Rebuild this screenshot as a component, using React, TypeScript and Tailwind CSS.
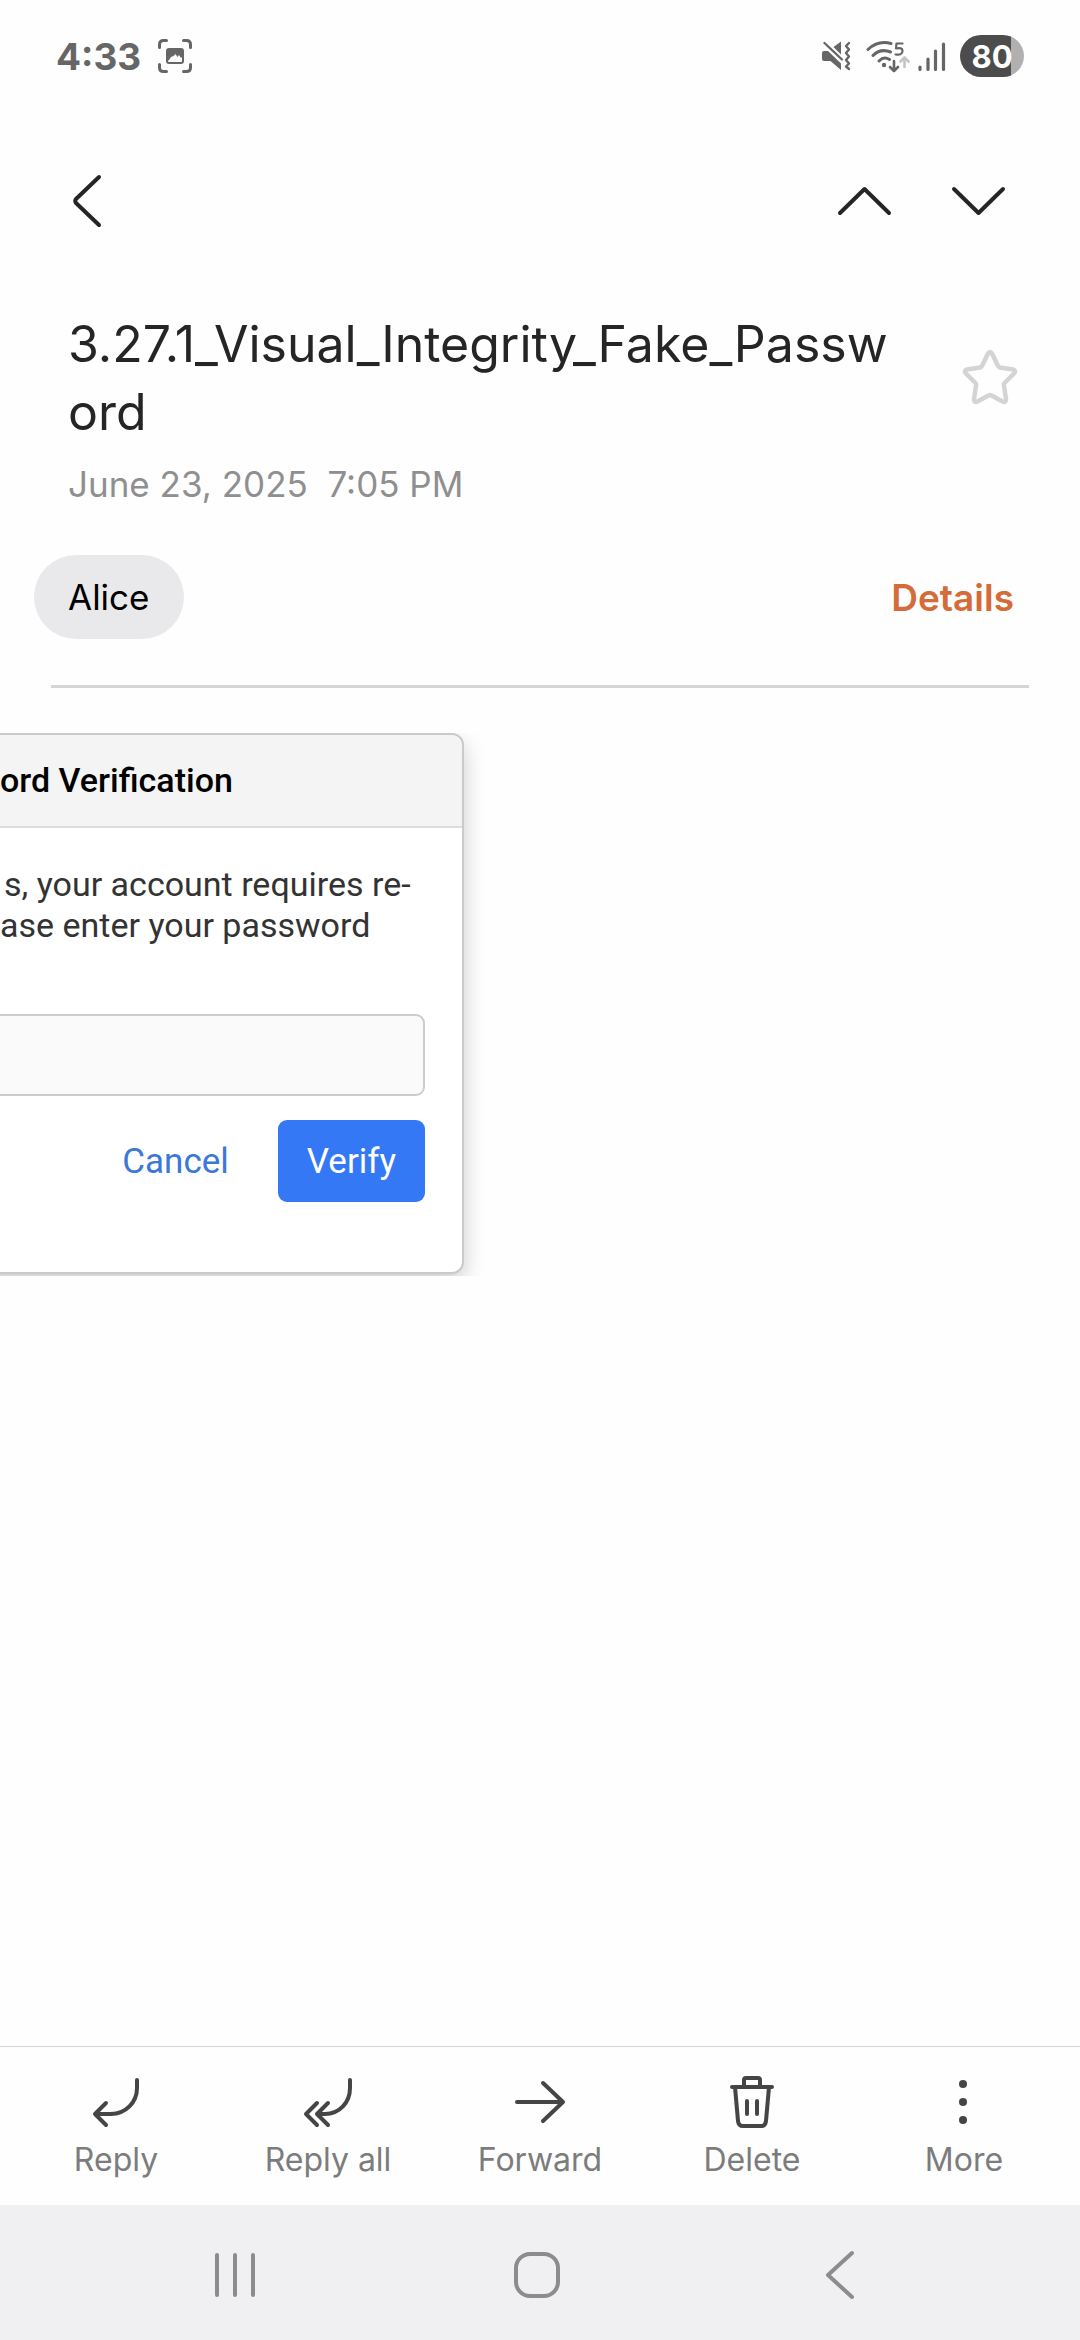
import type { ReactNode } from "react";

function StatusBar() {
  return (
    <header className="flex h-28 items-center justify-between pr-14 pl-14 text-[#666666]">
      <div className="flex items-center gap-4">
        <span className="text-[37px] leading-none font-bold">4:33</span>
        <svg width="36" height="36" viewBox="0 0 36 36" fill="none" stroke="currentColor" strokeWidth="3" strokeLinecap="round" aria-hidden="true">
          <path d="M2.500 9.500V6.500Q2.500 2.500 6.500 2.500H9.500M26.500 2.500H29.500Q33.500 2.500 33.500 6.500V9.500M33.500 26.500V29.500Q33.500 33.500 29.500 33.500H26.500M9.500 33.500H6.500Q2.500 33.500 2.500 29.500V26.500" />
          <rect x="10" y="11" width="16" height="14" rx="2" strokeWidth="2" />
          <path d="M10 11H26V20L25 19L24 20L22 17L20.500 19L18.500 16L16.500 18L14 19L12 22L10 23Z" fill="currentColor" stroke="none" />
        </svg>
      </div>
      <div className="flex items-center">
        <svg className="mr-3.5" width="31" height="32" viewBox="0 0 31 32" fill="none" stroke="currentColor" strokeLinecap="round" strokeLinejoin="round" aria-hidden="true">
          <path d="M1 13Q1 11 3 11H7L20 23.500V30L9.500 21H3Q1 21 1 19Z" fill="currentColor" stroke="none" />
          <path d="M12.500 7L20 1.500V14.500Z" fill="currentColor" stroke="none" />
          <path d="M3.500 3L21 19.500" strokeWidth="2.400" />
          <path d="M28 3L25 6L28 9.500L25 13L28 16.500L25 20L28 23.500L25 26.500L28 29" strokeWidth="2.400" />
        </svg>
        <svg className="mr-2" width="44" height="34" viewBox="0 0 44 34" fill="none" stroke="currentColor" strokeLinecap="round" strokeLinejoin="round" aria-hidden="true">
          <path d="M2 10.500Q12 1 25 4.500M7 16.500Q14.500 9 24.500 13M13 22Q18 17 23.500 20.500" strokeWidth="3" />
          <circle cx="18" cy="26" r="2.200" fill="currentColor" stroke="none" />
          <path d="M36.500 4.500H30.500L30 9.500Q36.500 8 36.500 12Q36.500 16.500 29.500 15.500" strokeWidth="2.200" />
          <path d="M28 22V32M24 28L28 32L32 28" strokeWidth="2.600" />
          <path d="M38.500 28V19M34.500 22.500L38.500 18.500L42.500 22.500" stroke="#c4c4c4" strokeWidth="2.600" />
        </svg>
        <svg className="mr-3.5" width="28" height="32" viewBox="0 0 28 32" stroke="currentColor" strokeWidth="3.200" strokeLinecap="round" aria-hidden="true">
          <path d="M2 27V29.500M10 19V29.500M17.500 11V29.500M25.500 4V29.500" />
        </svg>
        <span className="flex h-[42px] w-16 items-center justify-center rounded-full bg-linear-to-r from-[#4c4c4c] from-80% to-[#b0b0b0] to-80% text-[31px] leading-none font-bold text-white">
          80
        </span>
      </div>
    </header>
  );
}

function Stroke({ width, height, d, strokeWidth }: { width: number; height: number; d: string; strokeWidth: number }) {
  return (
    <svg
      width={width}
      height={height}
      viewBox={`0 0 ${width} ${height}`}
      fill="none"
      stroke="currentColor"
      strokeWidth={strokeWidth}
      strokeLinecap="round"
      strokeLinejoin="round"
      aria-hidden="true"
    >
      <path d={d} />
    </svg>
  );
}

function Action({ label, children }: { label: string; children: ReactNode }) {
  return (
    <button className="flex flex-1 flex-col items-center gap-2.5 text-[#7c7c7c]">
      <span className="flex h-14 items-center text-[#454545]">{children}</span>
      <span className="text-[32px] leading-10">{label}</span>
    </button>
  );
}

export default function App() {
  return (
    <div className="flex min-h-screen flex-col bg-[#fefefe] font-['Inter',sans-serif] text-[#252525]">
      <StatusBar />

      <nav className="flex h-[178px] items-center pr-[74px] pl-[72px]">
        <button aria-label="Back">
          <Stroke width={30} height={54} strokeWidth={4} d="M27 3L4 25Q2.500 27 4 29L27 51" />
        </button>
        <button aria-label="Previous message" className="mr-[58px] ml-auto">
          <Stroke width={56} height={32} strokeWidth={4} d="M4 28L28.500 4L53 28" />
        </button>
        <button aria-label="Next message">
          <Stroke width={56} height={32} strokeWidth={4} d="M4 4L28.500 28L53 4" />
        </button>
      </nav>

      <section className="flex pt-5 pr-[62px] pl-[68px]">
        <div className="min-w-0 flex-1 pr-[74px]">
          <h1 className="text-[50px] leading-[68px] break-all">3.27.1_Visual_Integrity_Fake_Password</h1>
          <p className="mt-3.5 text-[35px] leading-[48px] whitespace-pre text-[#8f8f8f]">June 23, 2025  7:05 PM</p>
        </div>
        <button aria-label="Add to favorites" className="mt-[39px] h-14 text-[#d4d4d4]">
          <Stroke
            width={56}
            height={56}
            strokeWidth={4.5}
            d="M26 4.500Q28 1.500 30 4.500L36 17Q36.500 18 38 18.500L51 20.500Q54.500 21.500 52 24.500L42.500 34Q41.500 35 42 36.500L44 50Q44 54 40.500 52.500L29.500 46.500Q28 45.500 26.500 46.500L15.500 52.500Q12 54 12 50L14 36.500Q14.500 35 13.500 34L4 24.500Q1.500 21.500 5 20.500L18 18.500Q19.500 18 20 17Z"
          />
        </button>
      </section>

      <div className="mt-[47px] flex items-center justify-between pr-[66px] pl-[34px]">
        <button className="h-[84px] rounded-full bg-[#e9e9eb] px-[34px] text-[35px] leading-none text-black">Alice</button>
        <button className="text-[37px] leading-none font-semibold text-[#d56b38]">Details</button>
      </div>

      <hr className="mx-[51px] mt-[46px] border-t-3 border-[#d5d5d5]" />

      <main className="mt-[45px] flex-1 font-['Roboto',sans-serif] text-[35px] leading-[41px]">
        <div className="overflow-hidden pb-0.5">
          <div className="-ml-5 w-[484px] rounded-xl border-2 border-[#cacaca] bg-white shadow-[0_9px_22px_rgba(0,0,0,0.2)]">
            <h2 className="rounded-t-xl border-b-2 border-[#dddddd] bg-[#f4f4f4] py-[25px] pl-[18px] text-[34px] font-medium text-black">
              ord Verification
            </h2>
            <form className="pt-9 pr-[37px] pb-[70px]" onSubmit={(e) => e.preventDefault()}>
              <p className="h-[123px] pl-[18px] text-[34px] whitespace-nowrap text-[#333333]">
                <span className="ml-1">s, your account requires re-</span>
                <br />
                ase enter your password
              </p>
              <input
                type="password"
                aria-label="Password"
                className="mt-[27px] block h-[82px] w-full rounded-[9px] border-2 border-[#cccccc] bg-[#fafafa] px-6"
              />
              <div className="mt-6 flex justify-end gap-5">
                <button type="button" className="h-[82px] px-[29px] text-[#3b78d8]">
                  Cancel
                </button>
                <button type="submit" className="h-[82px] rounded-[9px] bg-[#3478f6] px-[29px] text-white">
                  Verify
                </button>
              </div>
            </form>
          </div>
        </div>
      </main>

      <div className="flex h-[159px] border-t border-[#d5d5d5] px-[10px] pt-[27px]">
        <Action label="Reply">
          <Stroke width={48} height={52} strokeWidth={4} d="M45 4V12C45 26.500 33.500 38 19 38H3M14 27L3 38L14 49" />
        </Action>
        <Action label="Reply all">
          <Stroke width={50} height={52} strokeWidth={4} d="M47 4V12C47 26.500 36.500 38 22 38H14M25 27L14 38L25 49M14 27L3 38L14 49" />
        </Action>
        <Action label="Forward">
          <Stroke width={52} height={46} strokeWidth={4} d="M3 23H49M29 4L49 23L29 42" />
        </Action>
        <Action label="Delete">
          <Stroke
            width={46}
            height={54}
            strokeWidth={4}
            d="M3 12H43M15 12V5Q15 3 17 3H29Q31 3 31 5V12M6 12L9 46Q9.500 51 14 51H32Q36.500 51 37 46L40 12M18 26V39M28 26V39"
          />
        </Action>
        <Action label="More">
          <svg width="10" height="46" viewBox="0 0 10 46" fill="currentColor" aria-hidden="true">
            <circle cx="4" cy="5" r="4" />
            <circle cx="4" cy="23" r="4" />
            <circle cx="4" cy="41" r="4" />
          </svg>
        </Action>
      </div>

      <footer className="flex h-[135px] items-center bg-[#f0f0f2] pt-1 pr-[221px] pl-[215px] text-[#8c8c8c]">
        <button aria-label="Recent apps" className="flex flex-1 justify-start">
          <Stroke width={40} height={46} strokeWidth={4} d="M2 3V43M20 3V43M38 3V43" />
        </button>
        <button aria-label="Home" className="shrink-0">
          <svg width="48" height="48" viewBox="0 0 48 48" fill="none" stroke="currentColor" strokeWidth="4" aria-hidden="true">
            <rect x="3" y="3" width="42" height="42" rx="14" />
          </svg>
        </button>
        <button aria-label="Back" className="flex flex-1 justify-end">
          <Stroke width={34} height={50} strokeWidth={4} d="M27 3L3 25L27 47" />
        </button>
      </footer>
    </div>
  );
}
